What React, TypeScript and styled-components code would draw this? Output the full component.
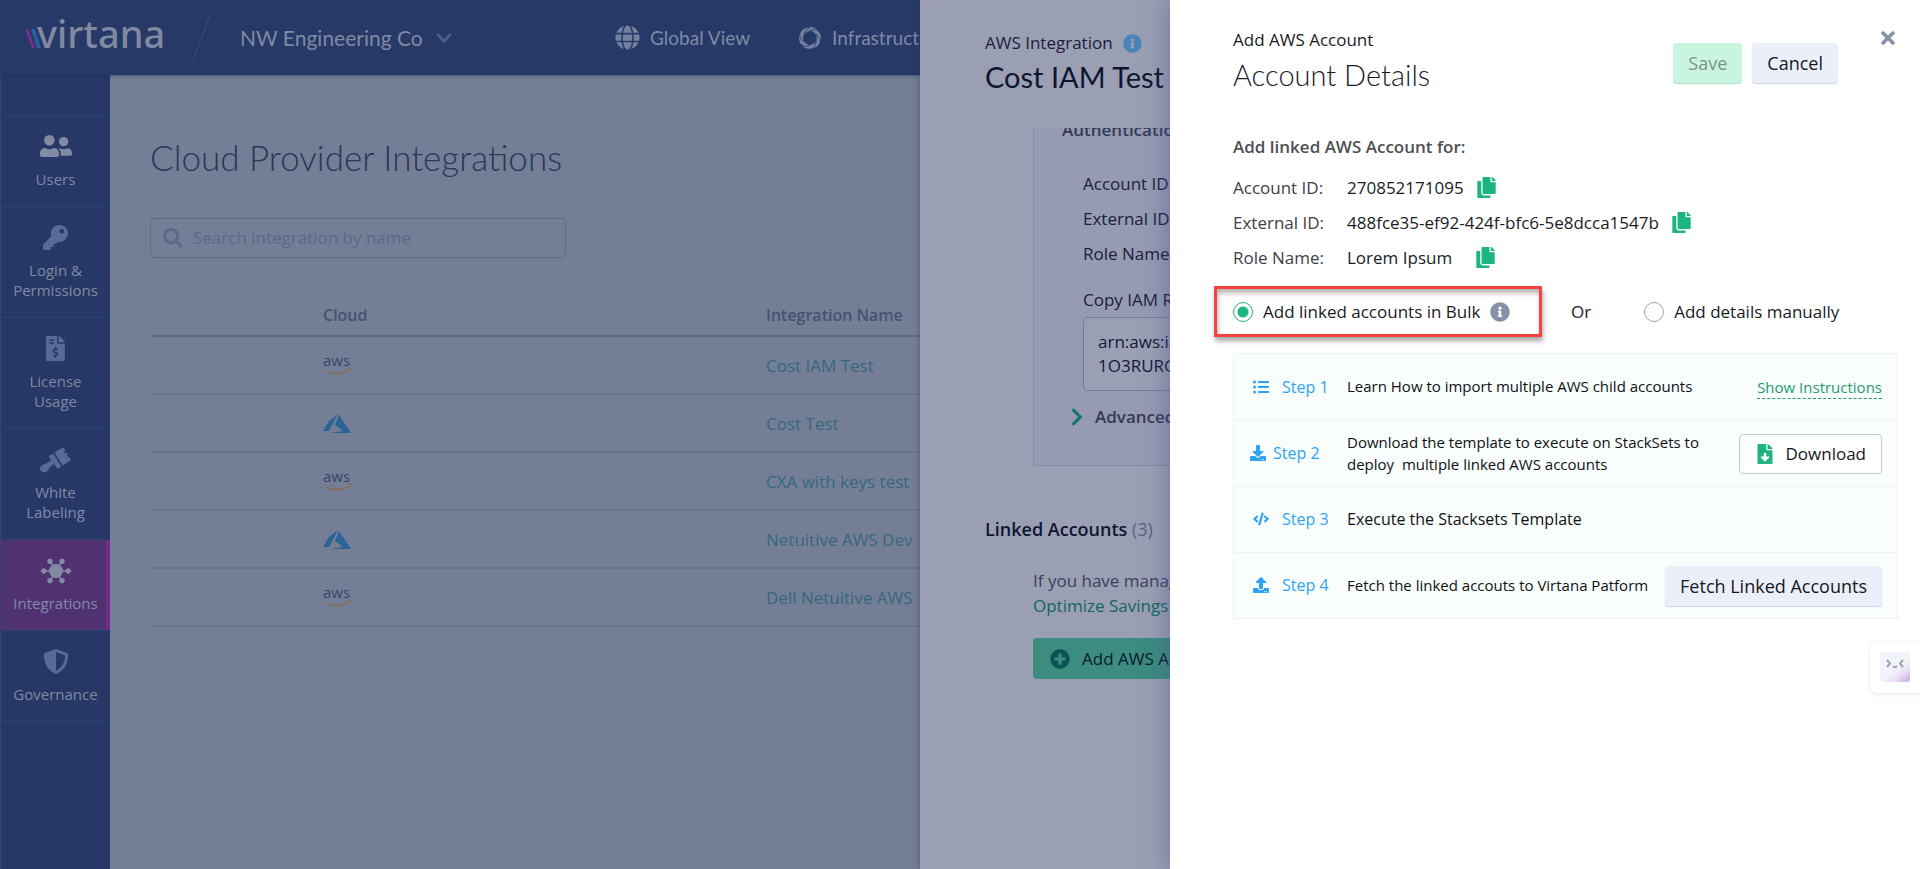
import React from 'react';
import styled, { createGlobalStyle } from 'styled-components';
import {
  FaKey, FaFileInvoiceDollar, FaGlobe, FaInfoCircle, FaSearch, FaChevronDown, FaChevronRight,
  FaPlusCircle, FaListUl, FaDownload, FaCode, FaUpload, FaTimes, FaCopy, FaFileDownload,
} from 'react-icons/fa';

const heading = `'Lato', 'Open Sans', sans-serif`;

const GlobalStyle = createGlobalStyle`
  * { box-sizing: border-box; }
  html, body, #root { height: 100%; }
  body { margin: 0; overflow: hidden; font: 16px/24px 'Open Sans', sans-serif; color: #1b1b1f; }
  h1, h2, h3, p, dl, dd { margin: 0; font-weight: 400; }
  button { font: inherit; color: inherit; cursor: pointer; }
  a { text-decoration: none; color: inherit; }
  svg { display: block; flex: none; overflow: visible; }
`;

const Page = styled.div`
  position: relative;
  min-height: 100%;
  display: flex;
  flex-direction: column;
  overflow: hidden;
  background: #747e97;
`;

const TopBar = styled.header`
  height: 75px;
  display: flex;
  align-items: center;
  background: #273967;
  color: #7f8aa3;
  box-shadow: 0 1px 3px rgba(30, 44, 84, 0.5);
  z-index: 1;
`;

const LogoLink = styled.a`
  margin-left: 25px;
`;

const OrgButton = styled.button`
  display: flex;
  align-items: center;
  gap: 12px;
  width: 375px;
  padding: 0;
  border: 0;
  background: none;
  font-family: ${heading};
  font-size: 21px;
  svg { color: #4f5f88; }
`;

const TopLink = styled.a`
  display: flex;
  align-items: center;
  gap: 10px;
  margin-right: 48px;
  font-family: ${heading};
  font-size: 19px;
  white-space: nowrap;
  svg { color: #7480a0; }
`;

const Body = styled.div`
  flex: 1;
  display: flex;
`;

const SideNav = styled.nav`
  width: 110px;
  flex: none;
  padding-top: 40px;
  background: #273766;
  border-left: 1px solid #34456f;
`;

const NavItem = styled.a<{ $active?: boolean; $bright?: boolean }>`
  display: flex;
  flex-direction: column;
  align-items: center;
  gap: 11px;
  padding: 18px 4px 17px;
  border-top: 1px solid #2e4173;
  background: ${(p) => (p.$active ? '#503272' : 'transparent')};
  box-shadow: ${(p) => (p.$active ? 'inset -4px 0 0 #752b8c' : 'none')};
  color: ${(p) => (p.$active || p.$bright ? '#828ba4' : '#5a6a97')};
  &:last-child { border-bottom: 1px solid #2e4173; }
`;

const NavIcon = styled.span`
  display: grid;
  place-items: center;
  height: 24px;
`;

const NavLabel = styled.span`
  font-size: 15px;
  line-height: 20px;
  text-align: center;
  color: #7f8aa3;
  white-space: pre-line;
`;

const Main = styled.main`
  flex: 1;
  min-width: 0;
  padding: 60px 40px;
`;

const PageTitle = styled.h1`
  font-family: ${heading};
  font-weight: 300;
  font-size: 35px;
  line-height: 44px;
  color: #2b3757;
`;

const SearchBox = styled.label`
  display: flex;
  align-items: center;
  gap: 10px;
  width: 416px;
  height: 40px;
  margin-top: 39px;
  padding: 0 12px;
  border: 1px solid #5f6c8a;
  border-radius: 4px;
  color: #5c6987;
  input { flex: 1; border: 0; outline: 0; background: none; font: inherit; font-size: 17px; padding: 0; }
  input::placeholder { color: #5c6987; opacity: 1; }
`;

const Table = styled.table`
  width: 100%;
  margin-top: 36px;
  border-collapse: collapse;
  table-layout: fixed;
  text-align: left;
  th { height: 42px; padding: 0; font-weight: 600; color: #46526f; border-bottom: 2px solid #5f6b87; }
  td { height: 58px; padding: 2px 0 0; font-size: 17px; border-bottom: 2px solid #69748f; color: #36697a; }
  th:nth-child(1) { width: 443px; }
  th:nth-child(1), td:nth-child(1) { padding-left: 173px; }
  th:nth-child(2), td:nth-child(2) { padding-left: 173px; }
`;

const Drawer = styled.aside`
  position: absolute;
  top: 0;
  right: 0;
  bottom: 0;
  z-index: 2;
  overflow: hidden;
`;

const BackDrawer = styled(Drawer)`
  width: 1000px;
  padding: 31px 65px;
  background: #9a9fb3;
  box-shadow: 0 0 6px rgba(40, 50, 90, 0.5);
  color: #1a2140;
  font-size: 17px;
`;

const Eyebrow = styled.p`
  display: flex;
  align-items: center;
  gap: 10px;
  font-size: 17px;
`;

const BackTitle = styled.h2`
  margin-top: 4px;
  font-family: ${heading};
  font-weight: 400;
  font-size: 29px;
  line-height: 36px;
  color: #10162f;
`;

const AuthCard = styled.section`
  height: 338px;
  margin: 33px 0 0 48px;
  padding: 0 28px;
  overflow: hidden;
  display: flex;
  flex-direction: column;
  justify-content: flex-end;
  background: #969bb1;
  border: 1px solid #868da6;
  border-top: 0;
  border-radius: 0 0 4px 4px;
`;

const CardTitle = styled.h3`
  flex: none;
  margin-bottom: 24px;
  font-size: 17px;
  font-weight: 600;
  color: #333a58;
`;

const CardRow = styled.p`
  flex: none;
  margin-left: 21px;
  line-height: 35px;
`;

const ArnLabel = styled(CardRow)`
  margin-top: 11px;
`;

const ArnBox = styled.div`
  flex: none;
  width: 400px;
  margin: 0 0 14px 21px;
  padding: 12px 14px;
  border: 1px solid #747e9c;
  border-radius: 4px;
  background: #9a9fb3;
  color: #14193a;
`;

const Advanced = styled.button`
  flex: none;
  display: flex;
  align-items: center;
  gap: 8px;
  margin-bottom: 36px;
  padding: 0 0 0 5px;
  border: 0;
  background: none;
  font-weight: 600;
  color: #333a58;
  svg { color: #14766e; }
`;

const LinkedTitle = styled.h3`
  margin-top: 51px;
  font-size: 18px;
  font-weight: 600;
  color: #10162f;
  span { font-weight: 400; color: #596484; }
`;

const LinkedBody = styled.div`
  margin: 27px 0 0 48px;
  line-height: 25px;
  color: #3b425c;
  a { color: #14665f; }
`;

const AddButton = styled.button`
  display: flex;
  align-items: center;
  gap: 12px;
  height: 41px;
  width: 220px;
  margin-top: 20px;
  padding: 0 17px;
  border: 0;
  border-radius: 4px;
  background: #3c8c80;
  color: #0b1a30;
  white-space: nowrap;
  svg { color: #0e5358; }
`;

const FrontDrawer = styled(Drawer)`
  width: 750px;
  padding: 28px 22px 0 63px;
  background: #fff;
  box-shadow: 0 0 24px rgba(70, 75, 140, 0.55);
`;

const FrontHead = styled.header`
  display: flex;
  align-items: flex-start;
`;

const Titles = styled.div`
  flex: 1;
`;

const FrontTitle = styled.h2`
  margin-top: 5px;
  font-family: ${heading};
  font-weight: 300;
  font-size: 29px;
  line-height: 36px;
`;

const Button = styled.button<{ $kind: 'save' | 'plain' | 'outline' }>`
  display: flex;
  align-items: center;
  gap: 10px;
  height: 40px;
  padding: 0 15px;
  border-radius: 4px;
  font-size: ${(p) => (p.$kind === 'outline' ? 17 : 18)}px;
  white-space: nowrap;
  border: ${(p) => (p.$kind === 'outline' ? '1px solid #bcc8dc' : '0')};
  background: ${(p) => (p.$kind === 'save' ? '#c9f5e0' : p.$kind === 'plain' ? '#ebeff9' : '#fff')};
  box-shadow: ${(p) => (p.$kind === 'save' ? '0 1px 1px #9fe0c4' : p.$kind === 'plain' ? '0 1px 1px #cbd3e6' : 'none')};
  color: ${(p) => (p.$kind === 'save' ? '#7d9388' : '#17181c')};
`;

const Actions = styled.div`
  display: flex;
  gap: 10px;
  margin-top: 15px;
`;

const CloseButton = styled.button`
  margin-left: 40px;
  padding: 0;
  border: 0;
  background: none;
  color: #8791a8;
`;

const SubTitle = styled.h3`
  margin-top: 42px;
  font-size: 17px;
  font-weight: 600;
  color: #4e4f53;
`;

const Details = styled.dl`
  display: grid;
  grid-template-columns: 114px 1fr;
  grid-auto-rows: 35px;
  align-items: center;
  margin-top: 11px;
  font-size: 17px;
  dt { color: #3f4045; }
`;

const DetailValue = styled.dd`
  display: flex;
  align-items: center;
  gap: 12px;
  span { min-width: 116px; }
`;

const CopyButton = styled.button`
  padding: 0;
  border: 0;
  background: none;
  color: #1cb480;
`;

const Choices = styled.div`
  display: flex;
  align-items: center;
  margin: 11px 0 16px -19px;
  font-size: 17px;
`;

const Choice = styled.label`
  display: flex;
  align-items: center;
  gap: 10px;
  svg { color: #8791a8; }
`;

const Marked = styled.div`
  display: flex;
  align-items: center;
  width: 328px;
  height: 51px;
  padding-left: 16px;
  border: 3px solid #fa4040;
  box-shadow: 1px 4px 5px rgba(0, 0, 0, 0.35), inset 1px 4px 5px rgba(0, 0, 0, 0.3);
`;

const Or = styled.span`
  margin: 0 53px 0 29px;
`;

const Radio = styled.input`
  appearance: none;
  width: 20px;
  height: 20px;
  margin: 0;
  border: 1px solid #9aa3bb;
  border-radius: 50%;
  &:checked { border-color: #1cb480; background: radial-gradient(circle, #1cb480 5px, #fff 6px); }
`;

const Steps = styled.div`
  border: 1px solid #edf2f8;
  background: #f9fdfc;
`;

const Step = styled.div`
  display: grid;
  grid-template-columns: 113px 1fr auto;
  align-items: center;
  height: 66px;
  padding-right: 15px;
  font-size: 15px;
  line-height: 22px;
  color: #101114;
  white-space: pre;
  & + & { border-top: 1px solid #edf2f8; }
`;

const StepName = styled.span<{ $tight?: boolean }>`
  display: flex;
  align-items: center;
  gap: ${(p) => (p.$tight ? 7 : 13)}px;
  padding: 0 0 1px ${(p) => (p.$tight ? 16 : 19)}px;
  font-size: 16px;
  color: #2ea3f7;
`;

const StepText = styled.p<{ $large?: boolean }>`
  padding-bottom: 2px;
  font-size: ${(p) => (p.$large ? 16 : 15)}px;
`;

const Instructions = styled.a`
  line-height: 22px;
  color: #259a70;
  border-bottom: 1px dashed #259a70;
`;

const Helper = styled.button`
  position: absolute;
  right: 0;
  top: 642px;
  display: flex;
  align-items: flex-start;
  width: 50px;
  height: 51px;
  padding: 10px;
  border: 0;
  border-radius: 8px 0 0 8px;
  background: #fff;
  box-shadow: 0 1px 5px rgba(90, 90, 120, 0.14);
`;

const Face = styled.span`
  width: 30px;
  height: 30px;
  border-radius: 3px;
  background: linear-gradient(140deg, #f1f4f8 55%, #e9dcf4 75%, #caa4e8);
`;

const Virtana = () => (
  <svg width="139" height="32" viewBox="0 0 139 32" role="img" aria-label="virtana">
    <path d="M0 7h3l7 19H7z" fill="#7a2d92" />
    <path d="M6 7h4l6 19h-4z" fill="#2b5f9c" />
    <text x="12" y="26" fontFamily="'Noto Sans', sans-serif" fontSize="38" fontWeight="500" fill="#8089a0">virtana</text>
  </svg>
);

const Slash = () => (
  <svg width="76" height="48" viewBox="0 0 76 48" aria-hidden="true">
    <path d="M29 47L46 1" stroke="#3d4e79" strokeWidth="1" />
  </svg>
);

const Swirl = () => (
  <svg width="24" height="24" viewBox="0 0 24 24" fill="currentColor" stroke="#273967" strokeWidth="0.800" aria-hidden="true">
    {[0, 60, 120, 180, 240, 300].map((a) => (
      <path key={a} transform={`rotate(${a} 12 12)`} d="M6 8.500C6 4 8 1.500 12 .8c4-.3 7 1.500 9 5.200C17 4.500 11 4 6 8.500z" />
    ))}
  </svg>
);

const Users = () => (
  <svg width="32" height="22" viewBox="0 0 96 66" fill="currentColor" aria-hidden="true">
    <circle cx="28" cy="16" r="16" />
    <path d="M16 39c8 5 17 5 25 0 9 0 16 6 16 15v6c0 3-2 6-6 6H6c-4 0-6-3-6-6v-6c0-9 7-15 16-15z" />
    <circle cx="71" cy="20" r="14" />
    <path d="M60 40c7 4 15 4 22 0 8 0 14 6 14 14v3c0 3-2 5-5 5H62c1-9 0-16-6-21z" />
  </svg>
);

const Brush = () => (
  <svg width="31" height="26" viewBox="0 0 92 76" fill="currentColor" aria-hidden="true">
    <path d="M43 16l24-14c2-1 4 0 5 2l3 6-3 8 10-1-2 9 10 6c2 3 1 7-1 9L67 54z" />
    <path d="M29 25l8-4c2-1 4 0 5 2l21 34-8 6c-2 1-4 1-5-1l-8-12c-8 4-13 9-17 17-4 8-16 11-22 4-6-6-3-16 6-19 9-2 16-6 24-13l-6-9c-1-2 0-4 2-5z" />
  </svg>
);

const Hub = () => (
  <svg width="30" height="26" viewBox="0 0 30 26" fill="currentColor" stroke="currentColor" aria-hidden="true">
    <path d="M3 13h24M9 3l12 20M21 3L9 23" strokeWidth="1.500" />
    <circle cx="15" cy="13" r="6.500" />
    {[[2.8, 13], [27.2, 13], [9, 3.3], [21, 3.3], [9, 22.7], [21, 22.7]].map(([x, y]) => (
      <circle key={`${x}-${y}`} cx={x} cy={y} r="2.300" />
    ))}
  </svg>
);

const Shield = () => (
  <svg width="24" height="25" viewBox="0 0 24 25" fill="currentColor" aria-hidden="true">
    <path fillRule="evenodd" d="M12 0l11 4c1 0 1 1 1 2 0 9-4 16-12 19C4 22 0 15 0 6c0-1 0-2 1-2zm0 3v18.500c6-3 9-8 9-15z" />
  </svg>
);

const Aws = () => (
  <svg width="30" height="22" viewBox="0 0 30 22" role="img" aria-label="AWS">
    <text x="0" y="11" fontFamily="'Open Sans', sans-serif" fontSize="15" fontWeight="500" fill="#3a4566">aws</text>
    <path d="M-1 13c8 6 19 6 26 2l1 1C18 21 7 21-1 13zM23 13c2-1 4-1 5-.5 0 1.500-.5 3-2 4.500l.8-3.200z" fill="#8a6c4c" />
  </svg>
);

const Azure = () => (
  <svg width="28" height="20" viewBox="0 0 28 20" role="img" aria-label="Azure">
    <path d="M15 0L6 7 0 17h6zM16 1l-4 10 8 6-13 2h21z" fill="#2a6496" />
  </svg>
);

const Squint = () => (
  <svg width="30" height="30" viewBox="0 0 30 30" fill="none" stroke="#9ea3ad" strokeWidth="2" aria-hidden="true">
    <path d="M7 8l3 3.500-3 3.500M23 8l-3 3.500 3 3.500M13 14c1 1.500 3 1.500 4 0" />
  </svg>
);

const clouds: [React.FC, string][] = [
  [Aws, 'Cost IAM Test'], [Azure, 'Cost Test'], [Aws, 'CXA with keys test'],
  [Azure, 'Netuitive AWS Dev'], [Aws, 'Dell Netuitive AWS'],
];

const accountDetails = [
  ['Account ID:', '270852171095'],
  ['External ID:', '488fce35-ef92-424f-bfc6-5e8dcca1547b'],
  ['Role Name:', 'Lorem Ipsum'],
];

const navItems = [
  { label: 'Users', icon: <Users />, bright: true },
  { label: 'Login &\nPermissions', icon: <FaKey size={25} /> },
  { label: 'License\nUsage', icon: <FaFileInvoiceDollar size={25} /> },
  { label: 'White\nLabeling', icon: <Brush /> },
  { label: 'Integrations', icon: <Hub />, active: true },
  { label: 'Governance', icon: <Shield /> },
];

export default function App() {
  return (
    <Page>
      <GlobalStyle />
      <TopBar>
        <LogoLink href="#"><Virtana /></LogoLink>
        <Slash />
        <OrgButton>NW Engineering Co <FaChevronDown size={18} /></OrgButton>
        <TopLink href="#"><FaGlobe size={25} />Global View</TopLink>
        <TopLink href="#"><Swirl />Infrastructure</TopLink>
      </TopBar>
      <Body>
        <SideNav>
          {navItems.map((item) => (
            <NavItem key={item.label} href="#" $active={item.active} $bright={item.bright}>
              <NavIcon>{item.icon}</NavIcon>
              <NavLabel>{item.label}</NavLabel>
            </NavItem>
          ))}
        </SideNav>
        <Main>
          <PageTitle>Cloud Provider Integrations</PageTitle>
          <SearchBox><FaSearch size={20} /><input placeholder="Search integration by name" aria-label="Search integration by name" /></SearchBox>
          <Table>
            <thead><tr><th>Cloud</th><th>Integration Name</th></tr></thead>
            <tbody>
              {clouds.map(([Icon, name]) => (
                <tr key={name}><td><Icon /></td><td><a href="#">{name}</a></td></tr>
              ))}
            </tbody>
          </Table>
        </Main>
      </Body>
      <BackDrawer>
        <Eyebrow>AWS Integration <FaInfoCircle size={19} color="#4a85ba" /></Eyebrow>
        <BackTitle>Cost IAM Test</BackTitle>
        <AuthCard>
          <CardTitle>Authentication</CardTitle>
          <CardRow>Account ID:</CardRow>
          <CardRow>External ID:</CardRow>
          <CardRow>Role Name:</CardRow>
          <ArnLabel>Copy IAM Role ARN</ArnLabel>
          <ArnBox>arn:aws:iam::<br />1O3RURGQ</ArnBox>
          <Advanced><FaChevronRight size={20} />Advanced</Advanced>
        </AuthCard>
        <LinkedTitle>Linked Accounts <span>(3)</span></LinkedTitle>
        <LinkedBody>
          <p>If you have management</p>
          <a href="#">Optimize Savings</a>
          <AddButton><FaPlusCircle size={20} />Add AWS Account</AddButton>
        </LinkedBody>
      </BackDrawer>
      <FrontDrawer>
        <FrontHead>
          <Titles>
            <Eyebrow>Add AWS Account</Eyebrow>
            <FrontTitle>Account Details</FrontTitle>
          </Titles>
          <Actions>
            <Button $kind="save">Save</Button>
            <Button $kind="plain">Cancel</Button>
          </Actions>
          <CloseButton aria-label="Close"><FaTimes size={20} /></CloseButton>
        </FrontHead>
        <SubTitle>Add linked AWS Account for:</SubTitle>
        <Details>
          {accountDetails.map(([name, value]) => (
            <React.Fragment key={name}>
              <dt>{name}</dt>
              <DetailValue><span>{value}</span><CopyButton aria-label={`Copy ${name}`}><FaCopy size={21} /></CopyButton></DetailValue>
            </React.Fragment>
          ))}
        </Details>
        <Choices>
          <Marked>
            <Choice><Radio type="radio" name="mode" defaultChecked />Add linked accounts in Bulk<FaInfoCircle size={20} /></Choice>
          </Marked>
          <Or>Or</Or>
          <Choice><Radio type="radio" name="mode" />Add details manually</Choice>
        </Choices>
        <Steps>
          <Step>
            <StepName><FaListUl size={16} />Step 1</StepName>
            <StepText>Learn How to import multiple AWS child accounts</StepText>
            <Instructions href="#">Show Instructions</Instructions>
          </Step>
          <Step>
            <StepName $tight><FaDownload size={16} />Step 2</StepName>
            <StepText>{'Download the template to execute on StackSets to\ndeploy  multiple linked AWS accounts'}</StepText>
            <Button $kind="outline"><FaFileDownload size={20} color="#1cb480" />Download</Button>
          </Step>
          <Step>
            <StepName><FaCode size={16} />Step 3</StepName>
            <StepText $large>Execute the Stacksets Template</StepText>
          </Step>
          <Step>
            <StepName><FaUpload size={16} />Step 4</StepName>
            <StepText>Fetch the linked accouts to Virtana Patform</StepText>
            <Button $kind="plain">Fetch Linked Accounts</Button>
          </Step>
        </Steps>
        <Helper aria-label="Assistant"><Face><Squint /></Face></Helper>
      </FrontDrawer>
    </Page>
  );
}
